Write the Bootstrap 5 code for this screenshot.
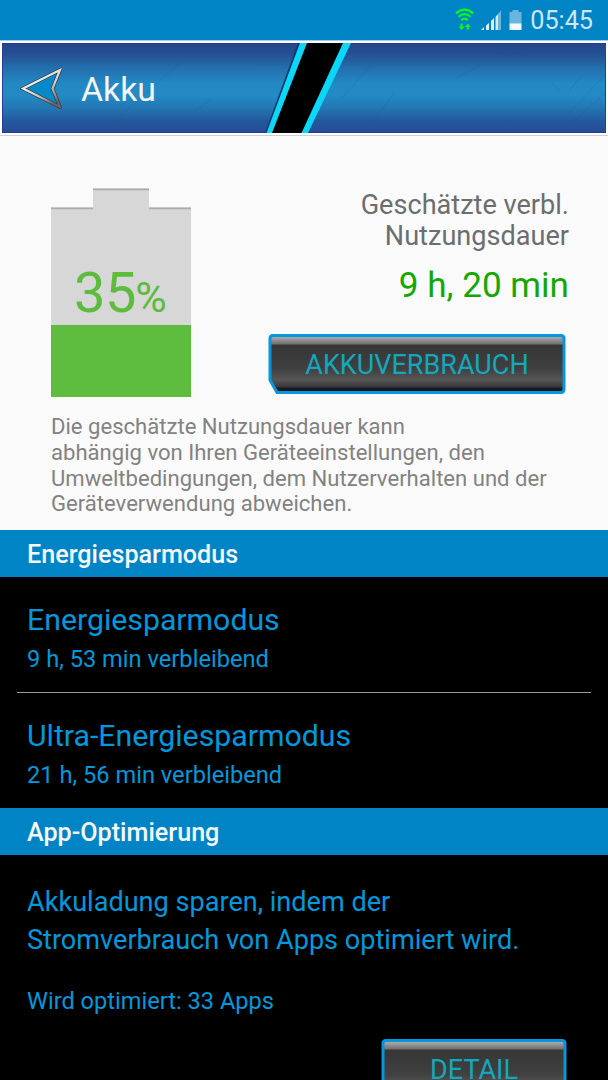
<!DOCTYPE html>
<html lang="de">
<head>
<meta charset="utf-8">
<meta name="viewport" content="width=device-width, initial-scale=1">
<title>Akku</title>
<link rel="stylesheet" href="https://cdn.jsdelivr.net/npm/bootstrap@5.3.0/dist/css/bootstrap.min.css">
<style>
  body { font-family: Roboto, "Liberation Sans", sans-serif; background: #000; color: #0099dd; height: 1080px; overflow: hidden; }
  .screen { width: 608px; height: 1080px; white-space: nowrap; }
  .statusbar { height: 40px; background: #0084c6; color: #cde7f4; padding: 0 15px 0 0; }
  .clock { font-size: 25.2px; line-height: 42px; margin-left: 5px; padding-top: 1px; }
  .titlebar { height: 96px; background: #fff; padding: 2px 2px 3px; border-bottom: 1px solid #cfcfd2; border-top: 1px solid #9fd0ea; }
  .metal { height: 90px; width: 604px; padding-left: 18px; position: relative; box-shadow: inset 0 0 0 1px #2a3c93;
    background: linear-gradient(#25478b 0%, #264f93 12%, #236fad 28%, #2289c4 45%, #238ac5 58%, #2377b4 72%, #235a9d 86%, #254a93 100%); }
  .metal-art { position: absolute; inset: 0; }
  .metal h1 { font-size: 33.8px; line-height: 40px; color: #f5f5f5; margin: 3px 0 0 19px; }
  .summary { height: 394px; background: #fafafa; padding: 52px 39px 0 51px; color: #6b6e6f; }
  .battery { width: 140px; height: 209px; position: relative; }
  .percent { position: absolute; left: 23px; top: 72px; font-size: 56px; line-height: 66px; color: #5dbb3d; letter-spacing: -.4px; }
  .percent span { font-size: 43px; margin-left: -1px; }
  .remaining-label { font-size: 27.1px; line-height: 31px; margin-top: 2px; }
  .remaining { font-size: 35.1px; line-height: 42px; color: #13a800; margin: 12px 0 0; }
  .metal-btn { height: 62px; padding: 0; border: 0; color: #14a7bd; font-size: 27px; line-height: 64px; position: relative; }
  .metal-btn svg { position: absolute; left: 0; top: 0; }
  .metal-btn span { position: relative; }
  .metal-btn.wide { width: 298px; margin: 27px 3px 0 0; }
  .metal-btn.narrow { width: 186px; }
  .note { font-size: 22.08px; line-height: 25.6px; color: #828282; margin: 17.400px 0 0; }
  .group-head { height: 47px; background: #0084c6; color: #f5f9fb; font-size: 25.15px; line-height: 49px; font-weight: 500; padding-left: 27px; margin: 0; }
  .mode-row { height: 115px; padding: 24px 0 0 27px; position: relative; }
  .mode-title { font-size: 30.25px; line-height: 38px; }
  .mode-sub { font-size: 23.65px; line-height: 30px; margin-top: 5px; }
  .rule { height: 1px; background: #999; margin: 0 17px; }
  .optim { padding: 28px 0 0 27px; font-size: 27.1px; line-height: 38px; }
  .optim-sub { font-size: 23.6px; line-height: 30px; margin-top: 27px; }
  .optim-action { padding: 22px 41px 0 0; }
</style>
</head>
<body>
<main class="screen overflow-hidden">
  <header>
    <div class="statusbar d-flex justify-content-end align-items-center">
      <svg width="70" height="40" viewBox="0 0 70 40" aria-hidden="true">
        <g fill="none" stroke="#00ff12" stroke-width="2.100">
          <path d="M1 13.400Q9.500 6 18 13.400M3.500 16.800Q9.500 11.500 15.500 16.800M6.200 20.300Q9.500 17 12.800 20.300"/>
          <path d="M6.500 23.500V28M12.800 29.500V25"/>
        </g>
        <path fill="#00ff12" d="M3.500 26.500h6l-3 3.500zM9.800 27h6l-3-3.500z"/>
        <g fill="#e1f1f9"><path d="M26 30l3-3v3zM31 25.500l3-2.500v7h-3zM36 21l3-3v12h-3z"/><path d="M40.500 17l2.500-3v16h-2.500z" fill="#d3eaf5"/><path d="M43 14l3-4V30h-3z" fill="#68b5dd"/></g>
        <path d="M54.500 12h3v-2h6v2h3v12h-12z" fill="#68b5dd"/><path d="M54.500 23.500h12V30h-12z" fill="#f5fafd"/>
      </svg>
      <span class="clock">05:45</span>
    </div>
    <div class="titlebar">
      <div class="metal d-flex align-items-center">
        <svg class="metal-art" width="604" height="90" viewBox="0 0 604 90" aria-hidden="true">
          <g stroke="#1c4f93" stroke-opacity=".2" fill="none"><path d="M455 35L478 22M500 5L520 12M550 40l8 8M562 75L603 32M565 85l38-35M568 47l12-15M110 80L180 18M190 70l20-14M340 55l34-38M370 80l22-30"/></g>
          <path d="M297 0L264 90" stroke="#123a68" stroke-width="2"/>
          <path d="M298 0h51L306 90h-41.500z" fill="#0bd8f8"/>
          <path d="M305 0h36L299.500 90h-29.500z" fill="#000"/>
        </svg>
        <svg class="position-relative" width="42" height="42" viewBox="0 0 42 42" role="img" aria-label="Zurück">
          <defs><linearGradient id="edge" x2=".7" y2="1"><stop stop-color="#222"/><stop offset=".35" stop-color="#eee"/><stop offset=".65" stop-color="#ccc"/><stop offset="1" stop-color="#666"/></linearGradient></defs>
          <path d="M3 21.500L40 3L32.500 21.500L40 40z" fill="#0788c8" stroke="#343434" stroke-width="3.500"/>
          <path d="M3 21.500L40 3L32.500 21.500L40 40z" fill="none" stroke="url(#edge)" stroke-width="2.200"/>
        </svg>
        <h1 class="position-relative fw-normal">Akku</h1>
      </div>
    </div>
  </header>

  <section class="summary">
    <div class="d-flex justify-content-between">
      <div class="battery">
        <svg width="140" height="209" viewBox="0 0 140 209" aria-hidden="true">
          <path d="M0 19.500h42V.5h56v19h42v118H0z" fill="#d7d7d7"/>
          <path d="M0 20.300h42M42 1.300h56M98 20.300h42" stroke="#aaa" stroke-width="1.700"/>
          <path d="M0 137h140v72H0z" fill="#5dbb3d"/>
        </svg>
        <div class="percent">35<span>%</span></div>
      </div>
      <div class="text-end d-flex flex-column align-items-end">
        <div class="remaining-label">Geschätzte verbl.<br>Nutzungsdauer</div>
        <div class="remaining">9 h, 20 min</div>
        <button class="btn metal-btn wide" type="button">
          <svg width="298" height="62" viewBox="0 0 298 62" aria-hidden="true">
            <defs>
              <linearGradient id="face" gradientUnits="userSpaceOnUse" x1="0" y1="3" x2="0" y2="58">
                <stop stop-color="#b4b4b4"/><stop offset=".15" stop-color="#6e6e6e"/><stop offset=".16" stop-color="#363636"/><stop offset=".6" stop-color="#404040"/><stop offset=".8" stop-color="#565656"/><stop offset=".92" stop-color="#383838"/><stop offset=".96" stop-color="#101820"/><stop offset="1" stop-color="#101820"/>
              </linearGradient>
            </defs>
            <path d="M5 2.500H293Q296 2.500 296 5.500V56Q296 59.500 293 59.500H9L2 47V5.500Q2 2.500 5 2.500z" fill="url(#face)" stroke="#0795dc" stroke-width="3"/>
          </svg>
          <span>AKKUVERBRAUCH</span>
        </button>
      </div>
    </div>
    <p class="note">Die geschätzte Nutzungsdauer kann<br>abhängig von Ihren Geräteeinstellungen, den<br>Umweltbedingungen, dem Nutzerverhalten und der<br>Geräteverwendung abweichen.</p>
  </section>

  <section>
    <h2 class="group-head">Energiesparmodus</h2>
    <div class="mode-row">
      <div class="mode-title">Energiesparmodus</div>
      <div class="mode-sub">9 h, 53 min verbleibend</div>
    </div>
    <div class="rule"></div>
    <div class="mode-row">
      <div class="mode-title">Ultra-Energiesparmodus</div>
      <div class="mode-sub">21 h, 56 min verbleibend</div>
    </div>
  </section>

  <section>
    <h2 class="group-head">App-Optimierung</h2>
    <div class="optim">
      <div>Akkuladung sparen, indem der<br>Stromverbrauch von Apps optimiert wird.</div>
      <div class="optim-sub">Wird optimiert: 33 Apps</div>
    </div>
    <div class="optim-action d-flex justify-content-end">
      <button class="btn metal-btn narrow" type="button">
        <svg width="186" height="62" viewBox="0 0 186 62" aria-hidden="true">
          <path d="M5 2.500H181Q184 2.500 184 5.500V56Q184 59.500 181 59.500H9L2 47V5.500Q2 2.500 5 2.500z" fill="url(#face)" stroke="#0795dc" stroke-width="3"/>
        </svg>
        <span>DETAIL</span>
      </button>
    </div>
  </section>
</main>
<script src="https://cdn.jsdelivr.net/npm/bootstrap@5.3.0/dist/js/bootstrap.bundle.min.js"></script>
</body>
</html>
